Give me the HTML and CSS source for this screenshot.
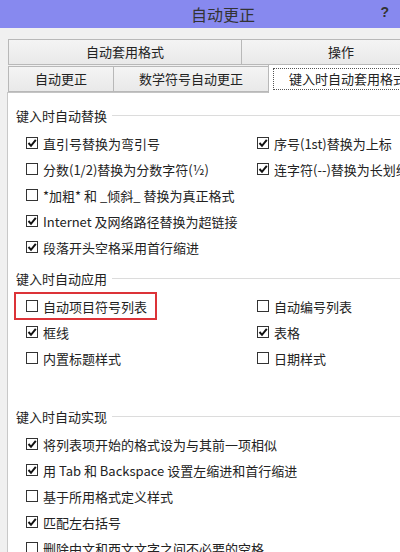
FILE: index.html
```html
<!DOCTYPE html>
<html>

<head>
  <title>自动更正</title>
  <link rel="stylesheet" href="styles.css">
</head>

<body>
  <div class="window">
    <header class="titlebar">
      <span class="title">自动更正</span>
      <span class="help">?</span>
    </header>
    <div class="dialog">
      <div class="tabs">
        <div class="tab-row">
          <div class="tab tab-format">自动套用格式</div>
          <div class="tab tab-actions">操作</div>
        </div>
        <div class="tab-row tab-row-front">
          <div class="tab tab-autocorrect">自动更正</div>
          <div class="tab tab-math">数学符号自动更正</div>
          <div class="tab tab-active"><span class="focus">键入时自动套用格式</span></div>
        </div>
      </div>
      <div class="panel">
        <section class="group">
          <div class="legend"><span>键入时自动替换</span></div>
          <div class="options">
            <label class="option"><span class="box checked"></span>直引号替换为弯引号</label>
            <label class="option"><span class="box checked"></span>序号(1st)替换为上标</label>
            <label class="option"><span class="box"></span>分数(1/2)替换为分数字符(½)</label>
            <label class="option"><span class="box checked"></span>连字符(--)替换为长划线</label>
            <label class="option wide"><span class="box"></span>*加粗* 和 _倾斜_ 替换为真正格式</label>
            <label class="option wide"><span class="box checked"></span>Internet 及网络路径替换为超链接</label>
            <label class="option wide"><span class="box checked"></span>段落开头空格采用首行缩进</label>
          </div>
        </section>
        <section class="group group-apply">
          <div class="legend"><span>键入时自动应用</span></div>
          <div class="options">
            <label class="option highlight"><span class="box"></span>自动项目符号列表</label>
            <label class="option"><span class="box"></span>自动编号列表</label>
            <label class="option"><span class="box checked"></span>框线</label>
            <label class="option"><span class="box checked"></span>表格</label>
            <label class="option"><span class="box"></span>内置标题样式</label>
            <label class="option"><span class="box"></span>日期样式</label>
          </div>
        </section>
        <section class="group">
          <div class="legend"><span>键入时自动实现</span></div>
          <div class="options">
            <label class="option wide"><span class="box checked"></span>将列表项开始的格式设为与其前一项相似</label>
            <label class="option wide"><span class="box checked"></span>用 Tab 和 Backspace 设置左缩进和首行缩进</label>
            <label class="option wide"><span class="box"></span>基于所用格式定义样式</label>
            <label class="option wide"><span class="box checked"></span>匹配左右括号</label>
            <label class="option wide"><span class="box"></span>删除中文和西文文字之间不必要的空格</label>
          </div>
        </section>
      </div>
    </div>
  </div>
</body>

</html>
```

FILE: styles.css
```css
body {
    margin: 0;
    font-family: "Noto Sans CJK SC", "Noto Sans", sans-serif;
    font-size: 13px;
    color: #222;
    background-color: #f0f0f0;
}

.window {
    width: 400px;
    height: 552px;
    overflow: hidden;
}

.titlebar {
    display: flex;
    align-items: center;
    height: 28px;
    background-color: #8789ef;
}

.title {
    margin-left: 191px;
    font-size: 16px;
    color: #333;
}

.help {
    margin-left: auto;
    margin-right: 11px;
    margin-top: -5px;
    font-family: "Liberation Sans", sans-serif;
    font-weight: bold;
    font-size: 14px;
    color: #333;
}

.dialog {
    padding-top: 11px;
}

.tabs {
    padding-left: 8px;
}

.tab-row {
    display: flex;
    align-items: flex-end;
    white-space: nowrap;
}

.tab-row-front {
    margin-top: -1px;
}

.tab {
    flex: none;
    box-sizing: border-box;
    height: 26px;
    line-height: 24px;
    text-align: center;
    border: 1px solid #b8b8b8;
    margin-right: -1px;
    background: linear-gradient(#f4f4f4, #e9e9e9);
}

.tab-format { width: 234px; }
.tab-actions { width: 200px; }
.tab-autocorrect { width: 106px; }
.tab-math { width: 156px; }

.tab-active {
    position: relative;
    z-index: 1;
    width: 160px;
    height: 29px;
    margin-bottom: -1px;
    padding: 3px 0 0 4px;
    border-bottom: none;
    background: #fff;
    line-height: normal;
    text-align: left;
}

.focus {
    display: block;
    box-sizing: border-box;
    height: 22px;
    line-height: 20px;
    padding-left: 15px;
    border: 1px dotted #555;
}

.panel {
    margin-left: 7px;
    height: 470px;
    padding: 12px 0 0 8px;
    background-color: #fff;
    border-top: 1px solid #c4c4c4;
    border-left: 1px solid #c8c8c8;
}

.group {
    margin-bottom: 8px;
}

.group-apply {
    margin-bottom: 35px;
}

.legend {
    display: flex;
    align-items: center;
    gap: 5px;
    height: 20px;
    white-space: nowrap;
}

.legend::after {
    content: "";
    flex: 1;
    height: 1px;
    background-color: #dcdcdc;
}

.options {
    display: grid;
    grid-template-columns: 231px 1fr;
    grid-auto-rows: 26px;
    margin-top: 5px;
    padding-left: 10px;
}

.option {
    display: flex;
    align-items: center;
    gap: 5px;
    white-space: nowrap;
}

.option.wide {
    grid-column: 1 / 3;
}

.highlight {
    position: relative;
}

.highlight::after {
    content: "";
    position: absolute;
    left: -12px;
    top: -1px;
    width: 139px;
    height: 24px;
    border: 2px solid #dc3338;
}

.box {
    flex: none;
    box-sizing: border-box;
    width: 12px;
    height: 12px;
    border: 1px solid #333;
    background: #fff no-repeat center;
}

.box.checked {
    background-image: url("data:image/svg+xml;utf8,<svg xmlns='http://www.w3.org/2000/svg' width='10' height='10' viewBox='0 0 10 10'><path d='M1.5 5 L4 7.8 L8.8 1.8' fill='none' stroke='%23111' stroke-width='2'/></svg>");
}
```
